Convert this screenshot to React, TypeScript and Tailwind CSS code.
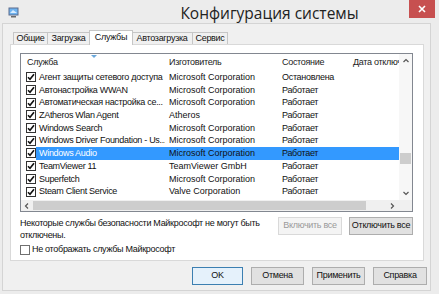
import React from 'react'

type Row = { name: string; maker: string; state: string; selected?: boolean }

const rows: Row[] = [
  { name: 'Агент защиты сетевого доступа', maker: 'Microsoft Corporation', state: 'Остановлена' },
  { name: 'Автонастройка WWAN', maker: 'Microsoft Corporation', state: 'Работает' },
  { name: 'Автоматическая настройка се...', maker: 'Microsoft Corporation', state: 'Работает' },
  { name: 'ZAtheros Wlan Agent', maker: 'Atheros', state: 'Работает' },
  { name: 'Windows Search', maker: 'Microsoft Corporation', state: 'Работает' },
  { name: 'Windows Driver Foundation - Us...', maker: 'Microsoft Corporation', state: 'Работает' },
  { name: 'Windows Audio', maker: 'Microsoft Corporation', state: 'Работает', selected: true },
  { name: 'TeamViewer 11', maker: 'TeamViewer GmbH', state: 'Работает' },
  { name: 'Superfetch', maker: 'Microsoft Corporation', state: 'Работает' },
  { name: 'Steam Client Service', maker: 'Valve Corporation', state: 'Работает' },
]

function Check({ checked }: { checked?: boolean }) {
  return (
    <span className="w-[10px] h-[10px] border border-[#333] bg-white flex items-center justify-center shrink-0">
      {checked && (
        <svg width="8" height="8" viewBox="0 0 8 8">
          <path d="M1 4.2 L3 6.3 L7 1.2" fill="none" stroke="#111" strokeWidth="1.6" />
        </svg>
      )}
    </span>
  )
}

function Chevron({ dir }: { dir: 'up' | 'down' | 'left' | 'right' }) {
  const d = {
    up: 'M1.5 5 L4 2.5 L6.5 5',
    down: 'M1.5 3 L4 5.5 L6.5 3',
    left: 'M5 1.5 L2.5 4 L5 6.5',
    right: 'M3 1.5 L5.5 4 L3 6.5',
  }[dir]
  return (
    <svg width="8" height="8" viewBox="0 0 8 8">
      <path d={d} fill="none" stroke="#555" strokeWidth="1.2" />
    </svg>
  )
}

function Btn({ children, disabled, primary }: { children: React.ReactNode; disabled?: boolean; primary?: boolean }) {
  return (
    <div
      className={
        'h-[18px] flex items-center justify-center border text-[9px] whitespace-nowrap ' +
        (disabled
          ? 'bg-[#f4f4f4] border-[#d9d9d9] text-[#9a9a9a]'
          : primary
            ? 'bg-[#e5f1fb] border-[#3c7fb1] text-[#111]'
            : 'bg-[#e1e1e1] border-[#adadad] text-[#111]')
      }
    >
      {children}
    </div>
  )
}

export default function App() {
  return (
    <div className="w-[439px] h-[294px] bg-[#ececec] flex flex-col font-['Liberation_Sans',Arial,sans-serif] tracking-[-0.3px] text-[#111] overflow-hidden">
      {/* title bar */}
      <div className="relative h-[23px] shrink-0 flex items-center justify-center">
        <svg className="absolute left-[8px] top-[7px]" width="11" height="11" viewBox="0 0 11 11">
          <rect x="0.5" y="0.5" width="10" height="8" fill="#5b6b8c" />
          <rect x="1.5" y="1.5" width="8" height="6" fill="#6fb3f0" />
          <path d="M2 6 L5 3 L9 6" fill="#d8ecff" />
          <rect x="3" y="9" width="5" height="1.5" fill="#6a6a6a" />
        </svg>
        <span className="text-[15.5px] tracking-normal text-[#222] pl-[100px] pt-[4px] font-['Open_Sans',sans-serif]">Конфигурация системы</span>
        <div className="absolute right-[4px] top-0 w-[26px] h-[18px] bg-[#c75050] flex items-center justify-center">
          <svg width="8" height="8" viewBox="0 0 8 8">
            <path d="M1 1 L7 7 M7 1 L1 7" stroke="#fff" strokeWidth="1.6" />
          </svg>
        </div>
      </div>

      {/* client area */}
      <div className="flex-1 ml-[2px] mr-[8px] mb-[3px] border border-[#d4d4d4] bg-[#f0f0f0] flex flex-col pl-[7px] pr-[6px] pt-[6px]">
        {/* tabs */}
        <div className="flex items-end h-[14px] pl-[3px] relative z-10 text-[9px] whitespace-nowrap">
          <div className="w-[35px] h-[12px] border border-b-0 border-[#c6c6c6] bg-[#f0f0f0] flex items-center justify-center">Общие</div>
          <div className="w-[42px] h-[12px] border border-b-0 border-l-0 border-[#c6c6c6] bg-[#f0f0f0] flex items-center justify-center">Загрузка</div>
          <div className="w-[44px] h-[15px] -mx-[1px] -mb-px border border-b-0 border-[#c6c6c6] bg-white flex items-center justify-center relative z-10">Службы</div>
          <div className="w-[61px] h-[12px] border border-b-0 border-l-0 border-[#c6c6c6] bg-[#f0f0f0] flex items-center justify-center">Автозагрузка</div>
          <div className="w-[35px] h-[12px] border border-b-0 border-l-0 border-[#c6c6c6] bg-[#f0f0f0] flex items-center justify-center">Сервис</div>
        </div>

        {/* tab panel */}
        <div className="h-[217px] border border-[#d9d9d9] bg-white flex flex-col pl-[9px] pr-[10px] pt-[8px]">
          {/* list */}
          <div className="h-[159px] border border-[#828790] bg-white flex">
            <div className="flex-1 flex flex-col overflow-hidden">
              <div className="h-[17px] relative grid grid-cols-[144px_113px_71px_60px] items-center text-[9px] text-[#222] whitespace-nowrap">
                <span className="pl-[6px]">Служба</span>
                <span className="pl-[4px]">Изготовитель</span>
                <span className="pl-[4px]">Состояние</span>
                <span className="pl-[4px] overflow-hidden">Дата отключения</span>
                <svg className="absolute left-[70px] top-[1px]" width="6" height="4" viewBox="0 0 6 4">
                  <path d="M0 0 L6 0 L3 3 Z" fill="#6aa8dc" />
                </svg>
              </div>
              <div className="flex-1 overflow-hidden">
                {rows.map((r) => (
                  <div key={r.name} className="h-[12.7px] flex items-center text-[9px] whitespace-nowrap">
                    <div className="w-[15px] pl-[5px] shrink-0 flex items-center">
                      <Check checked />
                    </div>
                    <div className={'flex-1 h-full grid grid-cols-[129px_113px_71px] items-center ' + (r.selected ? 'bg-[#3399ff]' : '')}>
                      <span className={'pl-[3px] overflow-hidden ' + (r.selected ? 'text-white' : '')}>{r.name}</span>
                      <span className="pl-[4px] tracking-normal">{r.maker}</span>
                      <span className="pl-[4px]">{r.state}</span>
                    </div>
                  </div>
                ))}
              </div>
              {/* horizontal scrollbar */}
              <div className="h-[11px] shrink-0 bg-[#f0f0f0] flex items-center">
                <div className="w-[12px] flex justify-center"><Chevron dir="left" /></div>
                <div className="w-[333px] h-[9px] bg-[#cdcdcd]" />
                <div className="flex-1" />
                <div className="w-[14px] flex justify-center"><Chevron dir="right" /></div>
              </div>
            </div>
            {/* vertical scrollbar */}
            <div className="w-[13px] shrink-0 bg-[#f7f7f7] flex flex-col items-center">
              <div className="h-[14px] flex items-center"><Chevron dir="up" /></div>
              <div className="flex-1 w-full flex flex-col">
                <div className="h-[85px]" />
                <div className="h-[11px] mx-[1px] bg-[#cdcdcd]" />
              </div>
              <div className="h-[14px] flex items-center"><Chevron dir="down" /></div>
              <div className="h-[11px] w-full bg-[#f0f0f0]" />
            </div>
          </div>

          {/* note + buttons */}
          <div className="flex justify-between mt-[1px] text-[9px]">
            <div className="pt-[4px] leading-[12px] text-[#111] whitespace-nowrap">
              Некоторые службы безопасности Майкрософт не могут быть
              <br />
              отключены.
            </div>
            <div className="flex gap-[7px] pt-[4px] shrink-0">
              <div className="w-[64px]"><Btn disabled>Включить все</Btn></div>
              <div className="w-[64px]"><Btn>Отключить все</Btn></div>
            </div>
          </div>
          <div className="flex items-center gap-[2px] mt-[2px] text-[9px]">
            <span className="w-[10px] h-[10px] border border-[#707070] bg-white" />
            <span>Не отображать службы Майкрософт</span>
          </div>
        </div>

        {/* dialog buttons */}
        <div className="flex justify-end gap-[8px] pt-[6px] -mr-[3px]">
          <div className="w-[51px]"><Btn primary>OK</Btn></div>
          <div className="w-[53px]"><Btn>Отмена</Btn></div>
          <div className="w-[53px]"><Btn>Применить</Btn></div>
          <div className="w-[54px]"><Btn>Справка</Btn></div>
        </div>
      </div>
    </div>
  )
}
